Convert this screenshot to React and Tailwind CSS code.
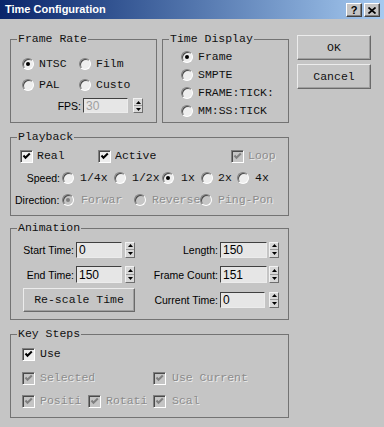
import React from "react";

const MONO = "font-['Liberation_Mono',monospace] text-[11.5px] leading-[14px]";
const SANS = "font-['Liberation_Sans',Arial,sans-serif] text-[10.5px] leading-[14px]";
const DIS = "text-[#8c8c8c] [text-shadow:1px_1px_0_#ececec]";

function Group({ title, className, children }) {
  return (
    <div className={`border border-[#737373] ${className}`}>
      <div className={`-mt-[8px] ml-[6px] w-fit bg-[#c5c5c5] px-[1px] text-[#111111] ${MONO}`}>{title}</div>
      {children}
    </div>
  );
}

function Radio({ checked, disabled }) {
  return (
    <span
      className={`inline-flex h-[12px] w-[12px] shrink-0 items-center justify-center rounded-full border border-t-[#808080] border-l-[#808080] border-r-white border-b-white shadow-[inset_1px_1px_0_#4a4a4a] ${
        disabled ? "bg-[#c5c5c5]" : "bg-[#eeeeee]"
      }`}
    >
      {checked && <span className={`h-[4px] w-[4px] rounded-full ${disabled ? "bg-[#808080]" : "bg-black"}`} />}
    </span>
  );
}

function Check({ checked = true, disabled }) {
  return (
    <span
      className={`inline-flex h-[13px] w-[13px] shrink-0 items-center justify-center border border-t-[#808080] border-l-[#808080] border-r-white border-b-white shadow-[inset_1px_1px_0_#4a4a4a] ${
        disabled ? "bg-[#c5c5c5]" : "bg-[#eeeeee]"
      }`}
    >
      {checked && (
        <svg width="9" height="9" viewBox="0 0 9 9">
          <path d="M1.5 3.5 L3.5 5.8 L7.8 1.5" fill="none" stroke={disabled ? "#808080" : "#000"} strokeWidth="2" />
        </svg>
      )}
    </span>
  );
}

function RadioItem({ w = "", label, checked, disabled, gap = "ml-[5px]", lw = "shrink-0" }) {
  return (
    <div className={`flex shrink-0 items-center ${w}`}>
      <Radio checked={checked} disabled={disabled} />
      <span className={`${gap} ${lw} overflow-hidden whitespace-nowrap ${MONO} ${disabled ? DIS : "text-[#111111]"}`}>{label}</span>
    </div>
  );
}

function CheckItem({ w = "", label, checked = true, disabled, gap = "ml-[4px]", lw = "shrink-0" }) {
  return (
    <div className={`flex shrink-0 items-center ${w}`}>
      <Check checked={checked} disabled={disabled} />
      <span className={`${gap} ${lw} overflow-hidden whitespace-nowrap ${MONO} ${disabled ? DIS : "text-[#111111]"}`}>{label}</span>
    </div>
  );
}

function Field({ value, w, disabled, h = "h-[16px]" }) {
  return (
    <div
      className={`flex ${h} ${w} items-center border border-t-[#404040] border-l-[#404040] border-r-[#ececec] border-b-[#ececec] bg-[#e6e6e6] pl-[2px] font-['Liberation_Sans',Arial,sans-serif] text-[12px] leading-none ${
        disabled ? "text-[#a0a0a0]" : "text-black"
      }`}
    >
      {value}
    </div>
  );
}

function Spin({ h = "h-[16px]" }) {
  return (
    <div className={`flex w-[10px] ${h} flex-col border border-t-[#f2f2f2] border-l-[#f2f2f2] border-r-[#6e6e6e] border-b-[#6e6e6e] bg-[#d8d8d8]`}>
      <div className="flex flex-1 items-center justify-center border-b border-b-[#9a9a9a]">
        <svg width="5" height="3" viewBox="0 0 5 3">
          <path d="M2.5 0 L5 3 L0 3Z" fill="#000" />
        </svg>
      </div>
      <div className="flex flex-1 items-center justify-center">
        <svg width="5" height="3" viewBox="0 0 5 3">
          <path d="M0 0 L5 0 L2.5 3Z" fill="#000" />
        </svg>
      </div>
    </div>
  );
}

function Btn({ children, className }) {
  return (
    <div
      className={`flex items-center justify-center border border-t-[#ececec] border-l-[#ececec] border-r-[#6a6a6a] border-b-[#6a6a6a] shadow-[inset_-1px_-1px_0_#a0a0a0] text-[#111111] ${MONO} ${className}`}
    >
      {children}
    </div>
  );
}

function TitleBtn({ children }) {
  return (
    <div className="flex h-[14px] w-[16px] items-center justify-center border border-t-white border-l-white border-r-[#404040] border-b-[#404040] bg-[#c5c5c5] shadow-[inset_-1px_-1px_0_#808080]">
      {children}
    </div>
  );
}

export default function App() {
  return (
    <div className="flex h-[427px] w-[384px] flex-col overflow-hidden bg-[#c5c5c5]">
      {/* Title bar */}
      <div className="flex h-[19px] shrink-0 items-center bg-linear-to-r from-[#0a246a] to-[#a6caf0] pl-[5px] pr-[4px]">
        <span className="font-['Liberation_Sans',Arial,sans-serif] text-[11px] font-bold leading-none text-white">Time Configuration</span>
        <div className="ml-auto mt-[1px] flex gap-[2px]">
          <TitleBtn>
            <span className="font-['Liberation_Sans',Arial,sans-serif] text-[11px] font-bold leading-none text-black">?</span>
          </TitleBtn>
          <TitleBtn>
            <svg width="8" height="7" viewBox="0 0 8 7">
              <path d="M0.5 0.5 L7.5 6.5 M7.5 0.5 L0.5 6.5" stroke="#000" strokeWidth="1.7" />
            </svg>
          </TitleBtn>
        </div>
      </div>

      {/* Top row */}
      <div className="flex items-start pl-[10px] pt-[20px]">
        <Group title="Frame Rate" className="h-[84px] w-[147px]">
          <div className="flex flex-col pl-[11px] pt-[7px]">
            <div className="flex h-[21px] items-center">
              <RadioItem w="w-[57px]" checked label="NTSC" />
              <RadioItem label="Film" />
            </div>
            <div className="flex h-[21px] items-center">
              <RadioItem w="w-[57px]" label="PAL" />
              <RadioItem label="Custo" />
            </div>
            <div className="flex h-[21px] items-center">
              <span className={`w-[59px] text-right text-black ${SANS}`}>FPS:</span>
              <div className="ml-[2px]">
                <Field value="30" w="w-[45px]" h="h-[15px]" disabled />
              </div>
              <div className="ml-[5px]">
                <Spin h="h-[15px]" />
              </div>
            </div>
          </div>
        </Group>

        <Group title="Time Display" className="ml-[5px] h-[84px] w-[127px]">
          <div className="flex flex-col pl-[18px] pt-[2px]">
            <div className="flex h-[18px] items-center">
              <RadioItem checked label="Frame" />
            </div>
            <div className="flex h-[18px] items-center">
              <RadioItem label="SMPTE" />
            </div>
            <div className="flex h-[18px] items-center">
              <RadioItem label="FRAME:TICK:" />
            </div>
            <div className="flex h-[18px] items-center">
              <RadioItem label="MM:SS:TICK" />
            </div>
          </div>
        </Group>

        <div className="-mt-[4px] ml-[8px] flex w-[74px] flex-col gap-[4px]">
          <Btn className="h-[25px]">OK</Btn>
          <Btn className="h-[25px]">Cancel</Btn>
        </div>
      </div>

      {/* Playback */}
      <div className="pl-[10px]">
        <Group title="Playback" className="mt-[14px] h-[79px] w-[279px]">
          <div className="flex flex-col pt-[1px]">
            <div className="flex h-[22px] items-center pl-[9px]">
              <CheckItem w="w-[78px]" label="Real" />
              <CheckItem w="w-[133px]" label="Active" />
              <CheckItem label="Loop" disabled />
            </div>
            <div className="flex h-[22px] items-center pl-[9px]">
              <span className={`w-[40px] text-right text-black ${SANS}`}>Speed:</span>
              <div className="ml-[2px] flex items-center">
                <RadioItem w="w-[52px]" label="1/4x" gap="ml-[6px]" />
                <RadioItem w="w-[48px]" label="1/2x" gap="ml-[6px]" />
                <RadioItem w="w-[39px]" label="1x" checked gap="ml-[7px]" />
                <RadioItem w="w-[36px]" label="2x" gap="ml-[5px]" />
                <RadioItem label="4x" gap="ml-[6px]" />
              </div>
            </div>
            <div className="flex h-[22px] items-center pl-[4px]">
              <span className={`w-[43px] text-right text-black ${SANS}`}>Direction:</span>
              <div className="ml-[4px] flex items-center">
                <RadioItem w="w-[72px]" label="Forwar" checked disabled gap="ml-[7px]" lw="w-[46px]" />
                <RadioItem w="w-[66px]" label="Reverse" disabled gap="ml-[6px]" />
                <RadioItem label="Ping-Pon" disabled gap="ml-[6px]" lw="w-[59px]" />
              </div>
            </div>
          </div>
        </Group>

        {/* Animation */}
        <Group title="Animation" className="mt-[12px] h-[92px] w-[279px]">
          <div className="flex flex-col pt-[2px]">
            <div className="flex h-[25px] items-center">
              <span className={`w-[63px] text-right text-black ${SANS}`}>Start Time:</span>
              <div className="ml-[2px]"><Field value="0" w="w-[46px]" /></div>
              <div className="ml-[3px]"><Spin /></div>
              <span className={`w-[83px] text-right text-black ${SANS}`}>Length:</span>
              <div className="ml-[2px]"><Field value="150" w="w-[47px]" /></div>
              <div className="ml-[2px]"><Spin /></div>
            </div>
            <div className="flex h-[25px] items-center">
              <span className={`w-[63px] text-right text-black ${SANS}`}>End Time:</span>
              <div className="ml-[2px]"><Field value="150" w="w-[46px]" h="h-[17px]" /></div>
              <div className="ml-[3px]"><Spin h="h-[17px]" /></div>
              <span className={`w-[83px] text-right text-black ${SANS}`}>Frame Count:</span>
              <div className="ml-[2px]"><Field value="151" w="w-[47px]" h="h-[17px]" /></div>
              <div className="ml-[2px]"><Spin h="h-[17px]" /></div>
            </div>
            <div className="flex h-[25px] items-center">
              <Btn className="ml-[12px] h-[24px] w-[112px]">Re-scale Time</Btn>
              <span className={`w-[83px] text-right text-black ${SANS}`}>Current Time:</span>
              <div className="ml-[2px]"><Field value="0" w="w-[45px]" /></div>
              <div className="ml-[4px]"><Spin /></div>
            </div>
          </div>
        </Group>

        {/* Key Steps */}
        <Group title="Key Steps" className="mt-[14px] h-[84px] w-[279px]">
          <div className="flex flex-col pl-[11px] pt-[2px]">
            <div className="flex h-[22px] items-center">
              <CheckItem label="Use" gap="ml-[5px]" />
            </div>
            <div className="flex h-[26px] items-center">
              <CheckItem w="w-[131px]" label="Selected" disabled gap="ml-[5px]" />
              <CheckItem label="Use Current" disabled gap="ml-[6px]" />
            </div>
            <div className="flex h-[20px] items-center">
              <CheckItem w="w-[66px]" label="Positi" disabled gap="ml-[5px]" />
              <CheckItem w="w-[65px]" label="Rotati" disabled gap="ml-[5px]" />
              <CheckItem label="Scal" disabled gap="ml-[6px]" />
            </div>
          </div>
        </Group>
      </div>
    </div>
  );
}
